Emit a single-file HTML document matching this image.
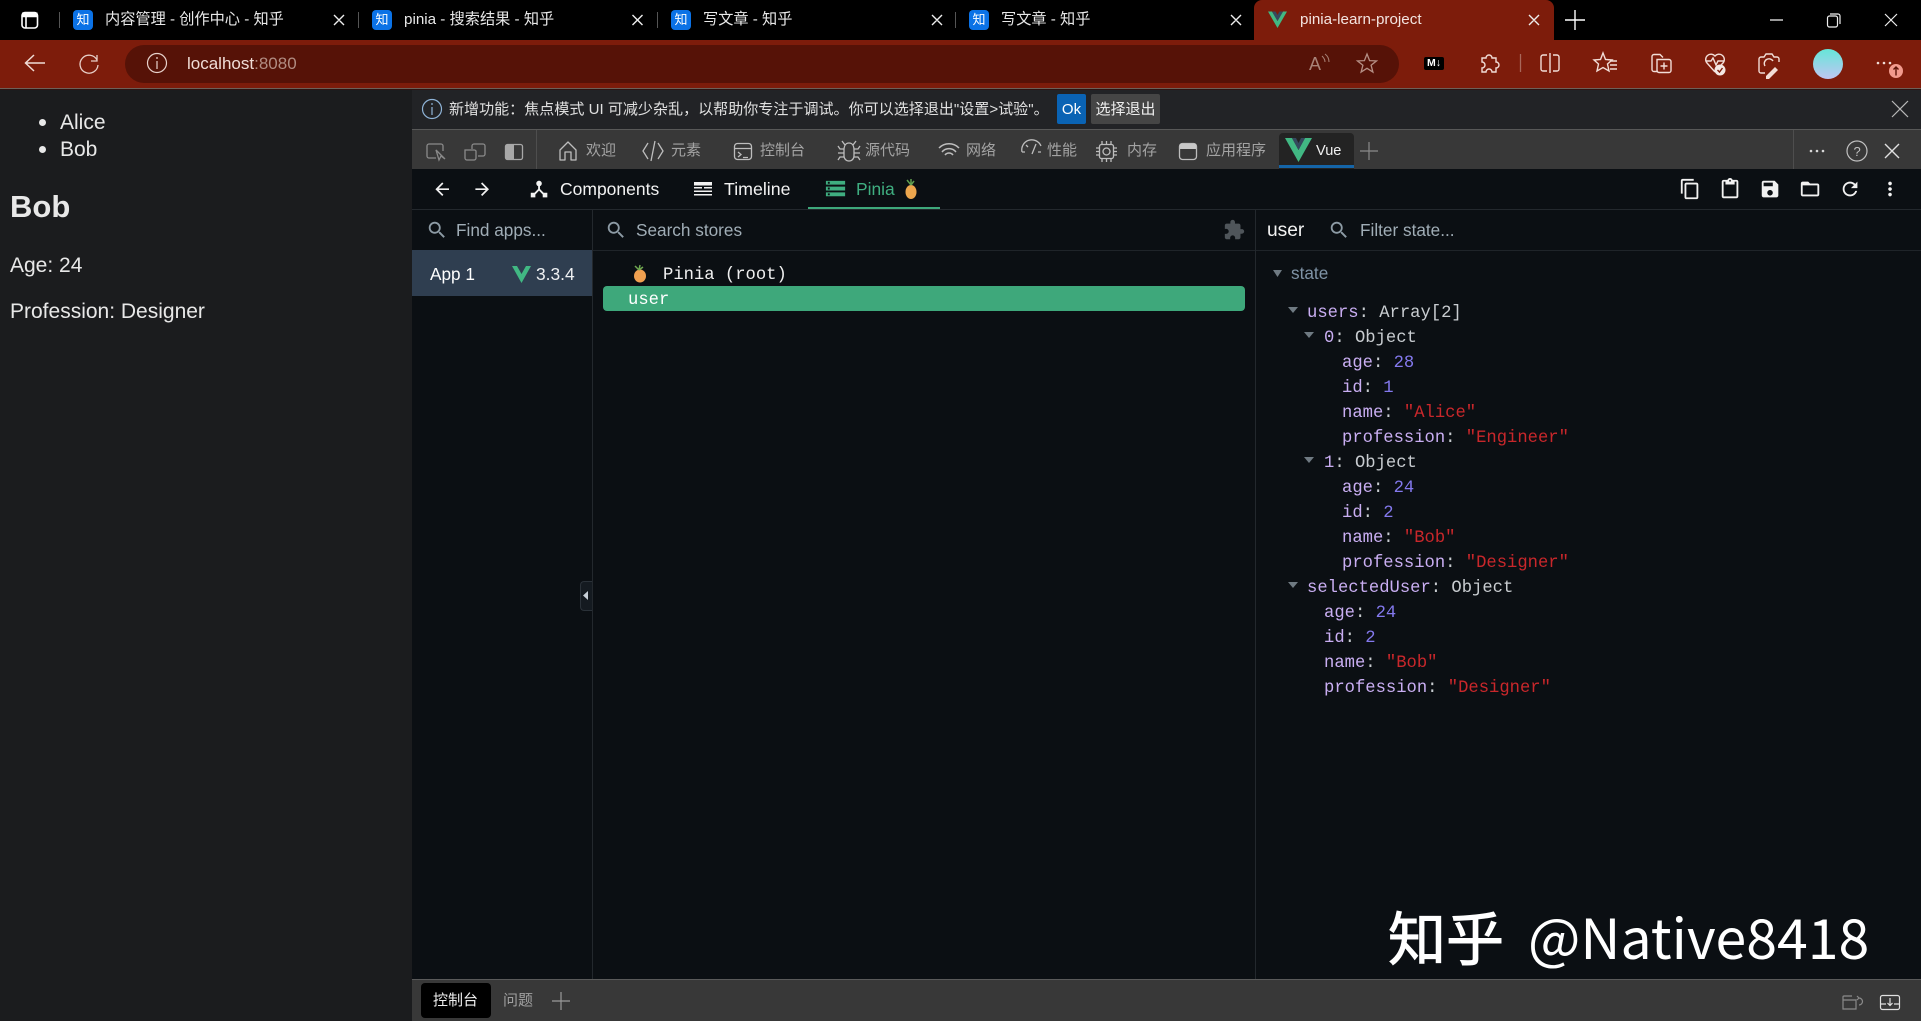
<!DOCTYPE html>
<html><head><meta charset="utf-8"><title>pinia-learn-project</title>
<style>
*{box-sizing:border-box}
html,body{margin:0;padding:0;width:1921px;height:1021px;overflow:hidden;background:#0b0f13}
body{position:relative;font-family:"Liberation Sans","Noto Sans CJK SC",sans-serif}
.b{position:absolute}
.t{position:absolute;white-space:nowrap;line-height:20px;height:20px}
.z{font-size:15.2px;color:#e8e8e8;top:10px}
.d{font-size:15px;color:#a3a3a3;top:141px}
.f{width:20px;height:20px;top:10px;background:#0b72e6;border-radius:4px;color:#fff;font-size:13px;line-height:20px;text-align:center}
.m{font-family:"Liberation Mono","DejaVu Sans Mono",monospace;font-size:17.2px;line-height:25px;height:25px;position:absolute;white-space:pre}
.k{color:#c9aef2}.v{color:#b9c3c9}.n{color:#8479ee}.s{color:#c9272b}.c{color:#c8ccd0}
.p{font-size:21px;color:#e8e8e8;left:10px}
.g{font-size:17.2px;color:#a0adb6}
svg{position:absolute;left:0;top:0;overflow:visible}
</style></head><body>
<!-- chrome -->
<div class="b" style="left:0;top:0;width:1921px;height:40px;background:#000"></div>
<div class="b" style="left:0;top:40px;width:1921px;height:48px;background:#7d1c0b"></div>
<div class="b" style="left:1254px;top:0;width:300px;height:40px;background:#7d1c0b;border-radius:8px 8px 0 0"></div>
<div class="b" style="left:125px;top:45px;width:1274px;height:38px;background:#561207;border-radius:19px"></div>
<div class="b" style="left:0;top:88px;width:1921px;height:1px;background:#6e6058"></div>
<div class="b" style="left:0;top:89px;width:1921px;height:1px;background:#2c1412"></div>
<div class="b f" style="left:73px">知</div><div class="t z" style="left:105px">内容管理 - 创作中心 - 知乎</div>
<div class="b f" style="left:372px">知</div><div class="t z" style="left:404px">pinia - 搜索结果 - 知乎</div>
<div class="b f" style="left:671px">知</div><div class="t z" style="left:703px">写文章 - 知乎</div>
<div class="b f" style="left:969px">知</div><div class="t z" style="left:1001px">写文章 - 知乎</div>
<div class="t z" style="left:1300px;color:#f3e4e0">pinia-learn-project</div>
<div class="t" style="left:187px;top:54px;font-size:17px;color:#f0dcd6">localhost<span style="color:#b18c82">:8080</span></div>
<div class="b" style="left:1424px;top:57px;width:20px;height:13px;background:#000;border-radius:2px;color:#fff;font-size:10.5px;font-weight:bold;line-height:13px;text-align:center">M↓</div>
<!-- page -->
<div class="b" style="left:0;top:90px;width:412px;height:931px;background:#1b1c1e"></div>
<div class="b" style="left:39px;top:118.500px;width:7px;height:7px;border-radius:50%;background:#e8e8e8"></div>
<div class="b" style="left:39px;top:145.500px;width:7px;height:7px;border-radius:50%;background:#e8e8e8"></div>
<div class="t p" style="left:60px;top:113px">Alice</div>
<div class="t p" style="left:60px;top:140px">Bob</div>
<div class="t" style="left:10px;top:197px;font-size:31px;font-weight:bold;color:#e8e8e8">Bob</div>
<div class="t p" style="top:256px">Age: 24</div>
<div class="t p" style="top:302px">Profession: Designer</div>
<!-- info bar -->
<div class="b" style="left:412px;top:90px;width:1509px;height:39px;background:#222326"></div>
<div class="b" style="left:412px;top:129px;width:1509px;height:1px;background:#585858"></div>
<div class="t" style="left:449px;top:100px;font-size:15.05px;color:#e0e0e0">新增功能：焦点模式 UI 可减少杂乱，以帮助你专注于调试。你可以选择退出"设置&gt;试验"。</div>
<div class="b" style="left:1057px;top:94px;width:29px;height:30px;background:#0a63b4;color:#fff;font-size:15px;line-height:32px;text-align:center;border-radius:2px">Ok</div>
<div class="b" style="left:1091px;top:94px;width:69px;height:30px;background:#454545;color:#eee;font-size:15px;line-height:32px;text-align:center;border-radius:2px">选择退出</div>
<!-- devtools tabs -->
<div class="b" style="left:412px;top:130px;width:1509px;height:39px;background:#383838"></div>
<div class="b" style="left:536px;top:130px;width:1px;height:39px;background:#4e4e4e"></div>
<div class="b" style="left:1793px;top:130px;width:1px;height:39px;background:#4e4e4e"></div>
<div class="t d" style="left:586px">欢迎</div>
<div class="t d" style="left:671px">元素</div>
<div class="t d" style="left:760px">控制台</div>
<div class="t d" style="left:865px">源代码</div>
<div class="t d" style="left:966px">网络</div>
<div class="t d" style="left:1047px">性能</div>
<div class="t d" style="left:1127px">内存</div>
<div class="t d" style="left:1206px">应用程序</div>
<div class="b" style="left:1279px;top:133px;width:75px;height:36px;background:#232323;border-radius:4px 4px 0 0"></div>
<div class="b" style="left:1279px;top:165px;width:75px;height:3px;background:#1565a8"></div>
<div class="t" style="left:1316px;top:141px;font-size:14.6px;color:#f0f0f0">Vue</div>
<!-- vue panel -->
<div class="b" style="left:412px;top:169px;width:1509px;height:811px;background:#0b0f13"></div>
<div class="b" style="left:412px;top:209px;width:1509px;height:1px;background:#23282d"></div>
<div class="b" style="left:412px;top:250px;width:1509px;height:1px;background:#1f2429"></div>
<div class="b" style="left:592px;top:210px;width:1px;height:770px;background:#23282d"></div>
<div class="b" style="left:1255px;top:210px;width:1px;height:770px;background:#23282d"></div>
<div class="b" style="left:808px;top:207px;width:132px;height:2px;background:#3ea87b"></div>
<div class="t" style="left:560px;top:179px;font-size:17.5px;color:#f2f2f2">Components</div>
<div class="t" style="left:724px;top:179px;font-size:17.8px;color:#f2f2f2">Timeline</div>
<div class="t" style="left:856px;top:179px;font-size:17.4px;color:#3fae80">Pinia</div>
<div class="t g" style="left:456px;top:220px">Find apps...</div>
<div class="t g" style="left:636px;top:220px">Search stores</div>
<div class="t" style="left:1267px;top:221px;font-size:19.200px;color:#f2f2f2">user</div>
<div class="t g" style="left:1360px;top:220px">Filter state...</div>
<div class="b" style="left:412px;top:250px;width:180px;height:46px;background:#2f3e50"></div>
<div class="t" style="left:430px;top:264px;font-size:17.2px;color:#fff">App 1</div>
<div class="t" style="left:536px;top:264px;font-size:17.4px;color:#eef0f2">3.3.4</div>
<div class="m" style="left:663px;top:263px;color:#f0f0f0">Pinia (root)</div>
<div class="b" style="left:603px;top:286px;width:642px;height:25px;background:#3ea87b;border-radius:4px"></div>
<div class="m" style="left:628px;top:288px;color:#fff">user</div>
<div class="b" style="left:580px;top:581px;width:12px;height:30px;background:#141a20;border:1px solid #2a3138;border-right:0;border-radius:4px 0 0 4px"></div>
<!-- state -->
<div class="t" style="left:1291px;top:263px;font-size:17.2px;color:#7f93a6">state</div>
<div class="m" style="left:1307px;top:301px"><span class="k">users</span><span class="c">: Array[2]</span></div>
<div class="m" style="left:1324px;top:326px"><span class="k">0</span><span class="c">: Object</span></div>
<div class="m" style="left:1342px;top:351px"><span class="k">age</span><span class="c">: </span><span class="n">28</span></div>
<div class="m" style="left:1342px;top:376px"><span class="k">id</span><span class="c">: </span><span class="n">1</span></div>
<div class="m" style="left:1342px;top:401px"><span class="k">name</span><span class="c">: </span><span class="s">"Alice"</span></div>
<div class="m" style="left:1342px;top:426px"><span class="k">profession</span><span class="c">: </span><span class="s">"Engineer"</span></div>
<div class="m" style="left:1324px;top:451px"><span class="k">1</span><span class="c">: Object</span></div>
<div class="m" style="left:1342px;top:476px"><span class="k">age</span><span class="c">: </span><span class="n">24</span></div>
<div class="m" style="left:1342px;top:501px"><span class="k">id</span><span class="c">: </span><span class="n">2</span></div>
<div class="m" style="left:1342px;top:526px"><span class="k">name</span><span class="c">: </span><span class="s">"Bob"</span></div>
<div class="m" style="left:1342px;top:551px"><span class="k">profession</span><span class="c">: </span><span class="s">"Designer"</span></div>
<div class="m" style="left:1307px;top:576px"><span class="k">selectedUser</span><span class="c">: Object</span></div>
<div class="m" style="left:1324px;top:601px"><span class="k">age</span><span class="c">: </span><span class="n">24</span></div>
<div class="m" style="left:1324px;top:626px"><span class="k">id</span><span class="c">: </span><span class="n">2</span></div>
<div class="m" style="left:1324px;top:651px"><span class="k">name</span><span class="c">: </span><span class="s">"Bob"</span></div>
<div class="m" style="left:1324px;top:676px"><span class="k">profession</span><span class="c">: </span><span class="s">"Designer"</span></div>
<!-- watermark -->
<div class="t" style="left:1388px;top:895px;height:80px;line-height:80px;font-family:'Noto Sans CJK SC',sans-serif;font-size:58px;font-weight:400;-webkit-text-stroke:1px #fff;color:#fff">知乎</div>
<div class="t" style="left:1528px;top:895px;height:80px;line-height:80px;font-family:'Noto Sans CJK SC',sans-serif;font-size:55.4px;font-weight:400;color:#fff">@Native8418</div>
<!-- bottom bar -->
<div class="b" style="left:412px;top:979px;width:1509px;height:1px;background:#5a5a5a"></div>
<div class="b" style="left:412px;top:980px;width:1509px;height:41px;background:#383838"></div>
<div class="b" style="left:421px;top:983px;width:70px;height:35px;background:#000;border-radius:4px"></div>
<div class="t" style="left:433px;top:991px;font-size:15px;color:#eee">控制台</div>
<div class="t" style="left:503px;top:991px;font-size:15px;color:#a0a0a0">问题</div>

<svg width="1921" height="1021" viewBox="0 0 1921 1021" fill="none">
<!-- top-left sidebar -->
<g stroke="#fff" stroke-width="1.6"><rect x="22" y="12.500" width="15.500" height="15.500" rx="3"/><path d="M22 16.500H37.500M26 16.500V28"/></g><rect x="22" y="12.500" width="15.500" height="4" fill="#fff"/>
<path d="M59.500 12V28M358.500 12V28M657.500 12V28M955.500 12V28" stroke="#555"/>
<!-- tab close -->
<g stroke="#eee" stroke-width="1.4"><path d="M334 15l10 10M344 15l-10 10M632.500 15l10 10M642.500 15l-10 10M932 15l10 10M942 15l-10 10M1231 15l10 10M1241 15l-10 10M1529 15l10 10M1539 15l-10 10"/></g>
<!-- active tab vue -->
<path d="M1268 11.500L1277.500 28 1287 11.500H1283L1277.500 21 1272 11.500Z" fill="#41b883"/><path d="M1272 11.500L1277.500 21 1283 11.500H1279.500L1277.500 15 1275.500 11.500Z" fill="#35495e"/>
<path d="M1565 20H1585M1575 10V30" stroke="#fff" stroke-width="1.4"/>
<path d="M1770 20H1783" stroke="#eee" stroke-width="1.3"/>
<g stroke="#eee" stroke-width="1.2"><rect x="1827.500" y="16" width="10" height="11" rx="2"/><path d="M1830 14H1838a2 2 0 0 1 2 2V24"/></g>
<path d="M1885 14l12 12M1897 14l-12 12" stroke="#eee" stroke-width="1.2"/>
<!-- nav -->
<path d="M45 63H26M34 55L25.500 63 34 71" stroke="#f0dcd6" stroke-width="1.5"/>
<path d="M97 60A9 9 0 1 0 98 65M97 55v6h-6" stroke="#e8cfc8" stroke-width="1.3"/>
<g stroke="#e8d2cc" stroke-width="1.2"><circle cx="157" cy="63" r="9.500"/><path d="M157 61V69M157 57V59"/></g>
<text x="1309" y="70" font-size="18" fill="#a88277" font-family="Liberation Sans">A</text><path d="M1322 56q3 3 3 6M1325 54q4 3 4 8" stroke="#a88277"/>
<path transform="translate(1367 64)" d="M0-10 2.600-3.400 9.500-3.100 4.100 1.200 5.900 8.100 0 4.300-5.900 8.100-4.100 1.200-9.500-3.100-2.600-3.400Z" stroke="#b58f85" stroke-width="1.300"/>
<g stroke="#f2ddd7" stroke-width="1.400">
<path transform="translate(1489 63)" d="M-7-5H-3A3 3 0 0 1 3-5H7V-1A3 3 0 0 1 7 5V9H3A3 3 0 0 0-3 9H-7V5A3 3 0 0 0-7-1Z"/>
<path transform="translate(1550 63)" d="M-3-8H-7A2 2 0 0 0-9-6V6A2 2 0 0 0-7 8H-3M3-8H7A2 2 0 0 1 9-6V6A2 2 0 0 1 7 8H3M0-10V10"/>
<path transform="translate(1604 63)" d="M-1-10 1.500-3.500 8-3 3.500 1 5 8-1 4.500-7 8-5.500 1-10-3-3.500-3.500ZM6-2H13M6 2H13M6 6H13"/>
<path transform="translate(1661 62.500)" d="M-3 9H-7A2 2 0 0 1-9 7V-6A2 2 0 0 1-7-8H-1L2-5M-4-3H8A2 2 0 0 1 10-1V8A2 2 0 0 1 8 10H-2A2 2 0 0 1-4 8ZM3 0V7M-.5 3.500H6.500"/>
<path transform="translate(1715 62)" d="M0 10L-8 1A5 5 0 0 1 0-6 5 5 0 0 1 8 1L6 3M-9-1H-4L-2-4 1 3 3-1H9"/>
<path transform="translate(1769 63)" d="M-4 10H-8A2 2 0 0 1-10 8V-4A2 2 0 0 1-8-6H-5L-3-9H3L5-6H8A2 2 0 0 1 10-4V-1M-4 3A4 4 0 0 1 4-2"/>
</g>
<circle cx="1720" cy="70" r="5.500" fill="#f4e8e4"/><path d="M1717.500 70l2 2 3-4" stroke="#7d1c0b" stroke-width="1.400"/>
<path d="M1766 76l9-9 3 3-9 9h-3z" fill="#f2ddd7"/>
<path d="M1520.500 54V72" stroke="#a8675a" stroke-width="1.300"/>
<defs><linearGradient id="av" x1="0" y1="0" x2="0" y2="1"><stop offset="0" stop-color="#66e6d8"/><stop offset="1" stop-color="#c0c6f2"/></linearGradient></defs>
<ellipse cx="1828" cy="64" rx="15" ry="15" fill="url(#av)"/>
<g fill="#f0dcd6"><circle cx="1878" cy="63" r="1.300"/><circle cx="1884" cy="63" r="1.300"/><circle cx="1890" cy="63" r="1.300"/></g>
<circle cx="1896" cy="71" r="7" fill="#f29a8d"/><path d="M1896 75.500V67M1893.500 69.500l2.500-2.500 2.500 2.500" stroke="#5a1206" stroke-width="1.400"/>
<!-- info -->
<g stroke="#8fb4d8" stroke-width="1.200"><circle cx="432" cy="109" r="9.500"/><path d="M432 107V115M432 103V105"/></g>
<path d="M1892 101l16 16M1908 101l-16 16" stroke="#b8b8b8" stroke-width="1.200"/>
<!-- devtools icons -->
<g stroke="#8a8a8a" stroke-width="1.300">
<path d="M436 158H429A2 2 0 0 1 427 156V146A2 2 0 0 1 429 144H441A2 2 0 0 1 443 146V151M436 150L439 160 441 156 445 159Z"/>
<path d="M472 149V146A2 2 0 0 1 474 144H483A2 2 0 0 1 485 146V154A2 2 0 0 1 483 156H478M465 150H474A2 2 0 0 1 476 151V158A2 2 0 0 1 474 160H467A2 2 0 0 1 465 158Z"/>
</g>
<rect x="505.500" y="144.500" width="17" height="15" rx="2" stroke="#a8a8a8" stroke-width="1.300"/><rect x="506" y="145" width="8" height="14" fill="#a8a8a8"/>
<g stroke="#bdbdbd" stroke-width="1.300">
<path d="M560 150L568 142 576 150V160H571V152H565V160H560Z" stroke-linejoin="round"/>
<path d="M648 143L643 151 648 159M658 143L663 151 658 159M655 141L651 161"/>
<rect x="734.500" y="143.500" width="17" height="16" rx="3"/><path d="M735 148.500H751M738 152L741 154.500 738 157M743 157.500H748"/>
<path d="M849 143C845 143 844 147 844 150V156A5 5 0 0 0 854 156V150C854 147 853 143 849 143ZM844 149H840L838 146M854 149H858L860 146M844 153H838M854 153H860M844 157H840L838 160M854 157H858L860 160M845 145L842 141M853 145L856 141"/>
<path d="M939 148A14 14 0 0 1 959 148M942 152A9 9 0 0 1 956 152M945 155A5 5 0 0 1 953 155" stroke-width="1.500"/>
<path d="M1022 152A10 10 0 0 1 1041 146M1026 145L1028 147M1022 152H1025M1038 152H1041M1032 154L1036 144"/>
<rect x="1099.500" y="144.500" width="14" height="14" rx="2"/><circle cx="1106.500" cy="151.500" r="3.500"/><path d="M1102 144V141M1106.500 144V141M1111 144V141M1102 159V162M1106.500 159V162M1111 159V162M1099 148H1096M1099 151.500H1096M1099 155H1096M1114 148H1117M1114 151.500H1117M1114 155H1117"/>
<rect x="1179.500" y="143.500" width="17" height="16" rx="3"/>
</g>
<rect x="1180" y="144" width="16" height="5" fill="#c8c8c8"/>
<path d="M1285 138L1298.500 162 1312 138H1305L1298.500 150 1292 138Z" fill="#41b883"/><path d="M1292 138L1298.500 150 1305 138H1301L1298.500 143 1296 138Z" fill="#35495e"/>
<path d="M1360 151H1378M1369 142V160" stroke="#8a8a8a" stroke-width="1.200"/>
<g fill="#d8d8d8"><circle cx="1811" cy="151" r="1.300"/><circle cx="1817" cy="151" r="1.300"/><circle cx="1823" cy="151" r="1.300"/></g>
<circle cx="1857" cy="151" r="10" stroke="#c0c0c0" stroke-width="1.200"/><text x="1853.500" y="156" font-size="13" fill="#c0c0c0" font-family="Liberation Sans">?</text>
<path d="M1885 144l14 14M1899 144l-14 14" stroke="#e0e0e0" stroke-width="1.400"/>
<!-- vue toolbar -->
<g fill="#f2f2f2">
<path transform="translate(432 179) scale(.85)" d="M20 11H7.830l5.590-5.590L12 4l-8 8 8 8 1.410-1.410L7.830 13H20v-2z"/>
<path transform="translate(472 179) scale(.85)" d="M12 4l-1.410 1.410L16.170 11H4v2h12.170l-5.580 5.590L12 20l8-8z"/>
<path transform="translate(528 178) scale(.92)" d="M17 16l-4-4V8.820C14.160 8.400 15 7.300 15 6c0-1.660-1.340-3-3-3S9 4.340 9 6c0 1.300.84 2.400 2 2.820V12l-4 4H3v5h5v-3.050l4-4.200 4 4.200V21h5v-5h-4z"/>
<rect x="694" y="182" width="18" height="3.500"/><rect x="694" y="187" width="8" height="1.500"/><rect x="704" y="187" width="8" height="1.500"/><rect x="694" y="190.500" width="18" height="1.500"/><rect x="694" y="194" width="18" height="1.500"/>
<g transform="translate(1679 178) scale(.92)"><path d="M16 1H4c-1.100 0-2 .9-2 2v14h2V3h12V1zm3 4H8c-1.100 0-2 .9-2 2v14c0 1.100.9 2 2 2h11c1.100 0 2-.9 2-2V7c0-1.100-.9-2-2-2zm0 16H8V7h11v14z"/></g>
<g transform="translate(1719 178) scale(.92)"><path d="M19 2h-4.180C14.400.84 13.300 0 12 0c-1.300 0-2.400.84-2.820 2H5c-1.100 0-2 .9-2 2v16c0 1.100.9 2 2 2h14c1.100 0 2-.9 2-2V4c0-1.100-.9-2-2-2zm-7 0c.55 0 1 .45 1 1s-.45 1-1 1-1-.45-1-1 .45-1 1-1zm7 18H5V4h2v3h10V4h2v16z"/></g>
<g transform="translate(1759 178) scale(.92)"><path d="M17 3H5c-1.110 0-2 .9-2 2v14c0 1.100.89 2 2 2h14c1.100 0 2-.9 2-2V7l-4-4zm-5 16c-1.660 0-3-1.340-3-3s1.340-3 3-3 3 1.340 3 3-1.340 3-3 3zm3-10H5V5h10v4z"/></g>
<g transform="translate(1799 178) scale(.92)"><path d="M20 6h-8l-2-2H4c-1.100 0-1.990.9-1.990 2L2 18c0 1.100.9 2 2 2h16c1.100 0 2-.9 2-2V8c0-1.100-.9-2-2-2zm0 12H4V8h16v10z"/></g>
<g transform="translate(1839 178) scale(.92)"><path d="M17.650 6.350C16.200 4.900 14.210 4 12 4c-4.420 0-7.990 3.580-7.990 8s3.570 8 7.990 8c3.730 0 6.840-2.550 7.730-6h-2.080c-.82 2.330-3.040 4-5.650 4-3.310 0-6-2.690-6-6s2.690-6 6-6c1.660 0 3.140.69 4.220 1.780L13 11h7V4l-2.350 2.350z"/></g>
<g transform="translate(1879 178) scale(.92)"><path d="M12 8c1.100 0 2-.9 2-2s-.9-2-2-2-2 .9-2 2 .9 2 2 2zm0 2c-1.100 0-2 .9-2 2s.9 2 2 2 2-.9 2-2-.9-2-2-2zm0 6c-1.100 0-2 .9-2 2s.9 2 2 2 2-.9 2-2-.9-2-2-2z"/></g>
</g>
<path transform="translate(824 177) scale(.96)" d="M2 20h20v-4H2v4zm2-3h2v2H4v-2zM2 4v4h20V4H2zm4 3H4V5h2v2zm-4 7h20v-4H2v4zm2-3h2v2H4v-2z" fill="#3fae80"/>
<!-- pineapples -->
<ellipse cx="911" cy="192" rx="5.500" ry="7" fill="#eda64d"/><path d="M911 185L907 180M911 185L911 179M911 185L914 181" stroke="#5f9e4f" stroke-width="1.500"/>
<ellipse cx="640" cy="276" rx="6" ry="6.500" fill="#f0a050"/><path d="M639 270L635 266M639 270L640 265M639 270L643 267" stroke="#6fa850" stroke-width="1.500"/>
<!-- search icons -->
<g fill="#8d9ba5">
<path transform="translate(426 219) scale(.92)" d="M15.500 14h-.79l-.28-.27C15.410 12.590 16 11.110 16 9.500 16 5.910 13.090 3 9.500 3S3 5.910 3 9.500 5.910 16 9.500 16c1.610 0 3.090-.59 4.230-1.570l.27.28v.79l5 4.990L20.490 19l-4.990-5zm-6 0C7.010 14 5 11.990 5 9.500S7.010 5 9.500 5 14 7.010 14 9.500 11.990 14 9.500 14z"/>
<path transform="translate(605 219) scale(.92)" d="M15.500 14h-.79l-.28-.27C15.410 12.590 16 11.110 16 9.500 16 5.910 13.090 3 9.500 3S3 5.910 3 9.500 5.910 16 9.500 16c1.610 0 3.090-.59 4.230-1.570l.27.28v.79l5 4.990L20.490 19l-4.990-5zm-6 0C7.010 14 5 11.990 5 9.500S7.010 5 9.500 5 14 7.010 14 9.500 11.990 14 9.500 14z"/>
<path transform="translate(1328 219) scale(.92)" d="M15.500 14h-.79l-.28-.27C15.410 12.590 16 11.110 16 9.500 16 5.910 13.090 3 9.500 3S3 5.910 3 9.500 5.910 16 9.500 16c1.610 0 3.090-.59 4.230-1.570l.27.28v.79l5 4.990L20.490 19l-4.990-5zm-6 0C7.010 14 5 11.990 5 9.500S7.010 5 9.500 5 14 7.010 14 9.500 11.990 14 9.500 14z"/>
</g>
<path transform="translate(1223 219) scale(.92)" d="M20.500 11H19V7c0-1.100-.9-2-2-2h-4V3.500C13 2.120 11.880 1 10.500 1S8 2.120 8 3.500V5H4c-1.100 0-1.990.9-1.990 2v3.800H3.500c1.490 0 2.700 1.210 2.700 2.700s-1.210 2.700-2.700 2.700H2V20c0 1.100.9 2 2 2h3.800v-1.500c0-1.490 1.210-2.700 2.700-2.700 1.490 0 2.700 1.210 2.700 2.700V22H17c1.100 0 2-.9 2-2v-4h1.500c1.380 0 2.500-1.120 2.500-2.500S21.880 11 20.500 11z" fill="#4f555a"/>
<!-- app1 V -->
<path d="M512 266L521.500 283 531 266H526L521.500 274 517 266Z" fill="#41b883"/>
<!-- triangles -->
<g fill="#6f7a82">
<path d="M1273 270H1282L1277.500 277Z"/><path d="M1288 307H1298L1293 313Z"/><path d="M1304 332H1314L1309 338Z"/><path d="M1304 457H1314L1309 463Z"/><path d="M1288 582H1298L1293 588Z"/>
</g>
<path d="M588 591V600L583 595.500Z" fill="#c8d0d8"/>
<!-- bottom icons -->
<path d="M552 1001H570M561 992V1010" stroke="#9a9a9a" stroke-width="1.200"/>
<g stroke="#8a8a8a" stroke-width="1.200"><path d="M1843 1001V997A1 1 0 0 1 1844 996H1852M1843 1000H1856V1009H1843ZM1857 1000l2-2 -2-2M1859 998A3 3 0 0 1 1859 1005"/></g>
<g stroke="#e0e0e0" stroke-width="1.200"><rect x="1880.500" y="995.500" width="19" height="14" rx="2"/><path d="M1881 1004H1886M1894 1004H1899M1890 998V1005M1887.500 1003L1890 1005.500 1892.500 1003"/></g>
</svg>
</body></html>
